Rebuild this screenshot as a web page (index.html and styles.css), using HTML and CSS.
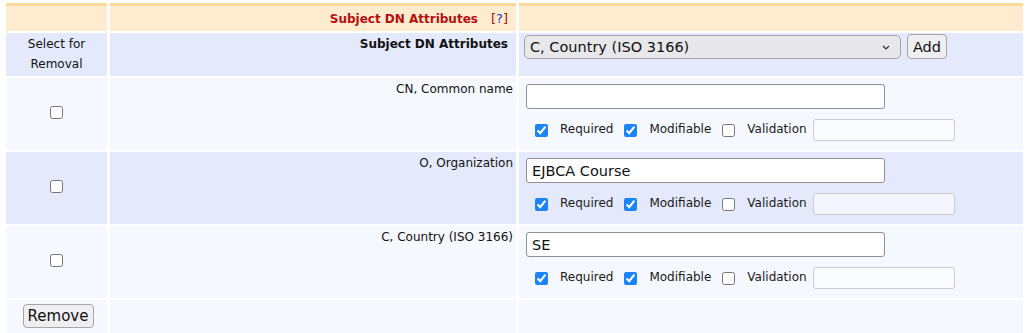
FILE: index.html
```html
<!DOCTYPE html>
<html lang="en">
<head>
<meta charset="UTF-8">
<meta name="viewport" content="width=device-width, initial-scale=1.0">
<title>Subject DN Attributes</title>
<link rel="stylesheet" href="styles.css">
</head>
<body>
<form id="profileForm">
<table class="profile">
    <colgroup>
        <col class="col-select">
        <col class="col-label">
        <col class="col-value">
    </colgroup>
    <tr class="section">
        <th></th>
        <th class="label">Subject DN Attributes<span class="help">[<a href="#">?</a>]</span></th>
        <th></th>
    </tr>
    <tr class="row-dark head">
        <td class="select-head">Select for<br>Removal</td>
        <td class="label"><strong>Subject DN Attributes</strong></td>
        <td class="value">
            <span class="select-wrap">
                <select id="newField" name="newField">
                    <option>C, Country (ISO 3166)</option>
                    <option>CN, Common name</option>
                    <option>O, Organization</option>
                    <option>OU, Organizational Unit</option>
                </select>
                <svg class="chevron" width="8" height="5" viewBox="0 0 8 5"><path d="M1 1 L4 4 L7 1" fill="none" stroke="#333" stroke-width="1.2"/></svg>
            </span><button type="button" class="btn btn-add">Add</button>
        </td>
    </tr>
    <tr class="row-light field">
        <td class="check"><input type="checkbox" name="remove" value="cn"></td>
        <td class="label">CN, Common name</td>
        <td class="value">
            <input type="text" class="text-value" name="cn" value="">
            <div class="opts">
                <label><input type="checkbox" checked><span>Required</span></label>
                <label><input type="checkbox" checked><span>Modifiable</span></label>
                <label><input type="checkbox"><span>Validation</span></label>
                <input type="text" class="text-validation" disabled>
            </div>
        </td>
    </tr>
    <tr class="row-dark field">
        <td class="check"><input type="checkbox" name="remove" value="o"></td>
        <td class="label">O, Organization</td>
        <td class="value">
            <input type="text" class="text-value" name="o" value="EJBCA Course">
            <div class="opts">
                <label><input type="checkbox" checked><span>Required</span></label>
                <label><input type="checkbox" checked><span>Modifiable</span></label>
                <label><input type="checkbox"><span>Validation</span></label>
                <input type="text" class="text-validation" disabled>
            </div>
        </td>
    </tr>
    <tr class="row-light field">
        <td class="check"><input type="checkbox" name="remove" value="c"></td>
        <td class="label">C, Country (ISO 3166)</td>
        <td class="value">
            <input type="text" class="text-value" name="c" value="SE">
            <div class="opts">
                <label><input type="checkbox" checked><span>Required</span></label>
                <label><input type="checkbox" checked><span>Modifiable</span></label>
                <label><input type="checkbox"><span>Validation</span></label>
                <input type="text" class="text-validation" disabled>
            </div>
        </td>
    </tr>
    <tr class="row-light actions">
        <td class="check"><button type="button" class="btn btn-remove">Remove</button></td>
        <td></td>
        <td></td>
    </tr>
</table>
</form>
</body>
</html>
```

FILE: styles.css
```css
body {
    margin: 0;
    font-family: "DejaVu Sans", Verdana, sans-serif;
    font-size: 12px;
    color: #111;
    background-color: #fff;
}
.profile {
    table-layout: fixed;
    width: 1023px;
    margin: 1px 0 0 3px;
    border-spacing: 3px 2px;
}
.col-select {
    width: 101px;
}
.col-label {
    width: 406px;
}
td, th {
    padding: 0;
}

/* section header */
.section {
    height: 28px;
}
.section th {
    background-color: #ffebcd;
    border-top: 3px solid #fdd89c;
    vertical-align: middle;
}
.section th.label {
    text-align: right;
    padding-right: 8px;
    color: #b50f0f;
    font-weight: bold;
}
.help {
    font-weight: normal;
    font-size: 13px;
    margin-left: 13px;
}
.help a {
    color: #1f2fc4;
    text-decoration: none;
}

/* rows */
.row-dark td {
    background-color: #e4eafc;
}
.row-light td {
    background-color: #f5f8fe;
}
.head {
    height: 43px;
}
.field {
    height: 72px;
}
.actions {
    height: 34px;
}
.select-head {
    text-align: center;
    vertical-align: top;
    line-height: 20px;
    padding-top: 1px;
}
td.label {
    text-align: right;
    vertical-align: top;
    padding: 3px 3px 0 0;
    line-height: 16px;
}
.head td.label {
    padding: 3px 8px 0 0;
}
td.value {
    vertical-align: top;
    padding: 6px 5px 0 5px;
}
.head td.value {
    padding-top: 2px;
}
td.check {
    text-align: center;
    vertical-align: middle;
}
td.check input[type="checkbox"] {
    margin: 0;
    width: 13px;
    height: 13px;
    accent-color: #1b84f8;
}

/* controls */
.select-wrap {
    position: relative;
    display: inline-block;
    vertical-align: top;
}
.select-wrap select {
    appearance: none;
    -webkit-appearance: none;
    width: 377px;
    height: 24px;
    margin: 0;
    padding: 0 24px 0 5px;
    font-family: inherit;
    font-size: 14.5px;
    color: #111;
    background-color: #e8e8ea;
    border: 1px solid #a4a4a8;
    border-radius: 5px;
}
.chevron {
    position: absolute;
    right: 11px;
    top: 10px;
}
.btn {
    font-family: inherit;
    font-size: 14.5px;
    color: #111;
    background-color: #efeff1;
    border: 1px solid #a6a6aa;
    border-radius: 4px;
    padding: 0;
    margin: 0;
}
.btn-add {
    width: 40px;
    height: 25px;
    margin: -1px 0 0 6px;
    vertical-align: top;
}
.btn-remove {
    width: 71px;
    height: 24px;
    margin: 0 0 2px 3px;
    font-size: 15px;
}
.text-value {
    display: block;
    box-sizing: border-box;
    width: 359px;
    height: 25px;
    margin: 0 0 0 2px;
    padding: 0 5px;
    font-family: inherit;
    font-size: 14.5px;
    color: #111;
    background-color: #fff;
    border: 1px solid #8f8f94;
    border-radius: 3px;
}
.opts {
    display: flex;
    align-items: center;
    margin: 10px 0 0 11px;
}
.opts label {
    display: inline-flex;
    align-items: center;
    margin-right: 11px;
    color: #1a1a1a;
}
.opts label span {
    margin-top: -3px;
}
.opts input[type="checkbox"] {
    margin: 1px 12px 0 0;
    width: 13px;
    height: 13px;
    accent-color: #1b84f8;
}
.text-validation {
    box-sizing: border-box;
    width: 142px;
    height: 22px;
    margin: 0 0 0 -5px;
    background-color: rgba(255, 255, 255, 0.55);
    border: 1px solid #cdcdd1;
    border-radius: 3px;
}
```
